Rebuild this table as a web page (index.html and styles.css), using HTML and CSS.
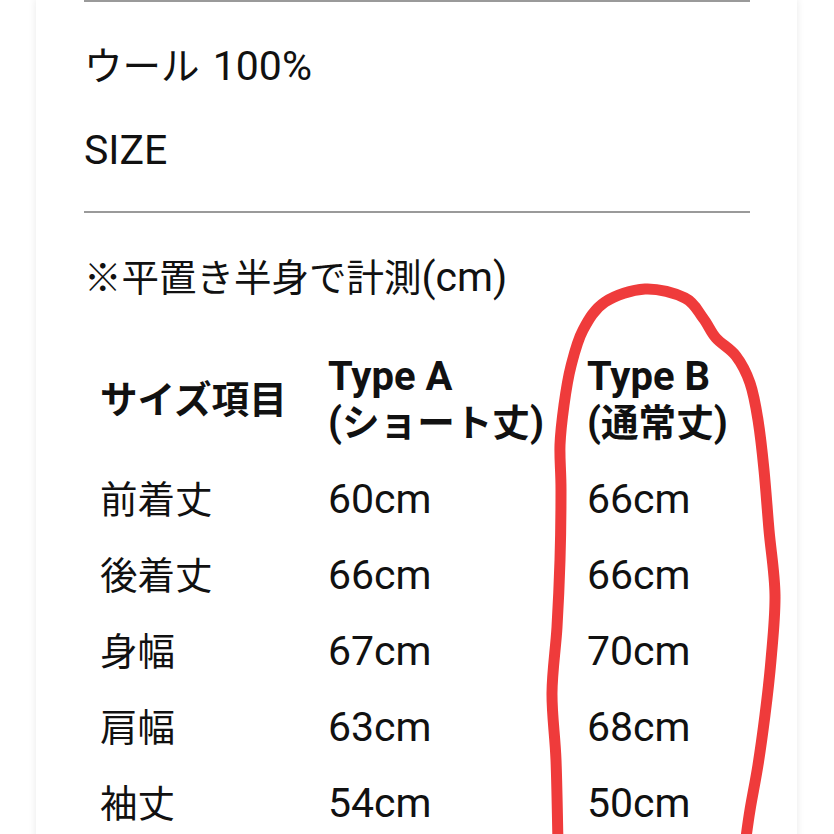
FILE: index.html
```html
<!DOCTYPE html>
<html lang="ja">
<head>
<meta charset="utf-8">
<title>SIZE</title>
<link rel="stylesheet" href="styles.css">
</head>
<body>
<div class="page">
  <div class="card">
    <hr class="rule rule-top">
    <p class="line material"><span class="ja">ウール</span> 100%</p>
    <p class="line size">SIZE</p>
    <hr class="rule rule-mid">
    <p class="line note"><span class="ja">※平置き半身で計測</span>(cm)</p>
    <div class="table">
      <div class="th th-label"><span class="ja">サイズ項目</span></div>
      <div class="th">Type A<br>(<span class="ja">ショート丈</span>)</div>
      <div class="th">Type B<br>(<span class="ja">通常丈</span>)</div>

      <div class="td td-label first"><span class="ja">前着丈</span></div>
      <div class="td first">60cm</div>
      <div class="td first">66cm</div>

      <div class="td td-label"><span class="ja">後着丈</span></div>
      <div class="td">66cm</div>
      <div class="td">66cm</div>

      <div class="td td-label"><span class="ja">身幅</span></div>
      <div class="td">67cm</div>
      <div class="td">70cm</div>

      <div class="td td-label"><span class="ja">肩幅</span></div>
      <div class="td">63cm</div>
      <div class="td">68cm</div>

      <div class="td td-label"><span class="ja">袖丈</span></div>
      <div class="td">54cm</div>
      <div class="td">50cm</div>
    </div>
  </div>
  <svg class="mark" width="834" height="834" viewBox="0 0 834 834" aria-hidden="true">
    <path d="M558 845 C557.7 830.8 557 785.3 556 760 C555 734.7 551.8 715.2 552 693 C552.2 670.8 555.7 649.2 557 627 C558.3 604.8 559.3 582.8 560 560 C560.7 537.2 561 509.2 561 490 C561 470.8 559.5 459.2 560 445 C560.5 430.8 562.2 418.2 564 405 C565.8 391.8 567.8 378.5 571 366 C574.2 353.5 577.3 340.7 583 330 C588.7 319.3 594.7 308.8 605 302 C615.3 295.2 631.7 289.7 645 289 C658.3 288.3 675.3 293.2 685 298 C694.7 302.8 697.8 311.3 703 318 C708.2 324.7 710.5 331.7 716 338 C721.5 344.3 730.3 348.5 736 356 C741.7 363.5 746.3 372.3 750 383 C753.7 393.7 755.7 405.5 758 420 C760.3 434.5 762.2 451.7 764 470 C765.8 488.3 767.2 509.2 769 530 C770.8 550.8 774.7 573.3 775 595 C775.3 616.7 772.7 640 771 660 C769.3 680 767.2 697.5 765 715 C762.8 732.5 760.5 749.2 758 765 C755.5 780.8 752.2 796.7 750 810 C747.8 823.3 745.8 839.2 745 845" fill="none" stroke="#ef3b3b" stroke-width="11" stroke-linejoin="round" stroke-linecap="round"/>
  </svg>
</div>
</body>
</html>
```

FILE: styles.css
```css
html, body {
  margin: 0;
  padding: 0;
  background: #ffffff;
}

body {
  font-family: Roboto, "Noto Sans CJK JP", sans-serif;
  color: #111111;
}

.page {
  position: relative;
  width: 834px;
  height: 834px;
  overflow: hidden;
}

.card {
  box-sizing: border-box;
  margin-left: 36px;
  width: 761px;
  min-height: 834px;
  padding: 0 47px 0 48px;
  background: #ffffff;
  box-shadow: 0 0 7px 1px rgba(0, 0, 0, 0.07);
}

.rule {
  border: 0;
  height: 2px;
  margin: 0;
  background: #9a9a9a;
}

.rule-mid {
  margin-top: 37px;
}

.ja {
  font-size: 0.915em;
}

.line {
  margin: 0;
  font-size: 41px;
  line-height: 48px;
}

.material {
  margin-top: 40px;
}

.material .ja {
  font-size: 0.94em;
  margin-right: 3px;
}

.size {
  margin-top: 35px;
}

.note {
  margin-top: 40px;
}

.table {
  display: grid;
  grid-template-columns: 228px 259px 1fr;
  padding-left: 16px;
  margin-top: 52px;
}

.th {
  font-size: 40px;
  font-weight: 700;
  line-height: 46px;
}

.th .ja {
  font-size: 0.94em;
}

.th-label {
  align-self: center;
}

.td {
  font-size: 41px;
  line-height: 75px;
}

.td.first {
  margin-top: 16px;
}

.mark {
  position: absolute;
  left: 0;
  top: 0;
  pointer-events: none;
}
```
